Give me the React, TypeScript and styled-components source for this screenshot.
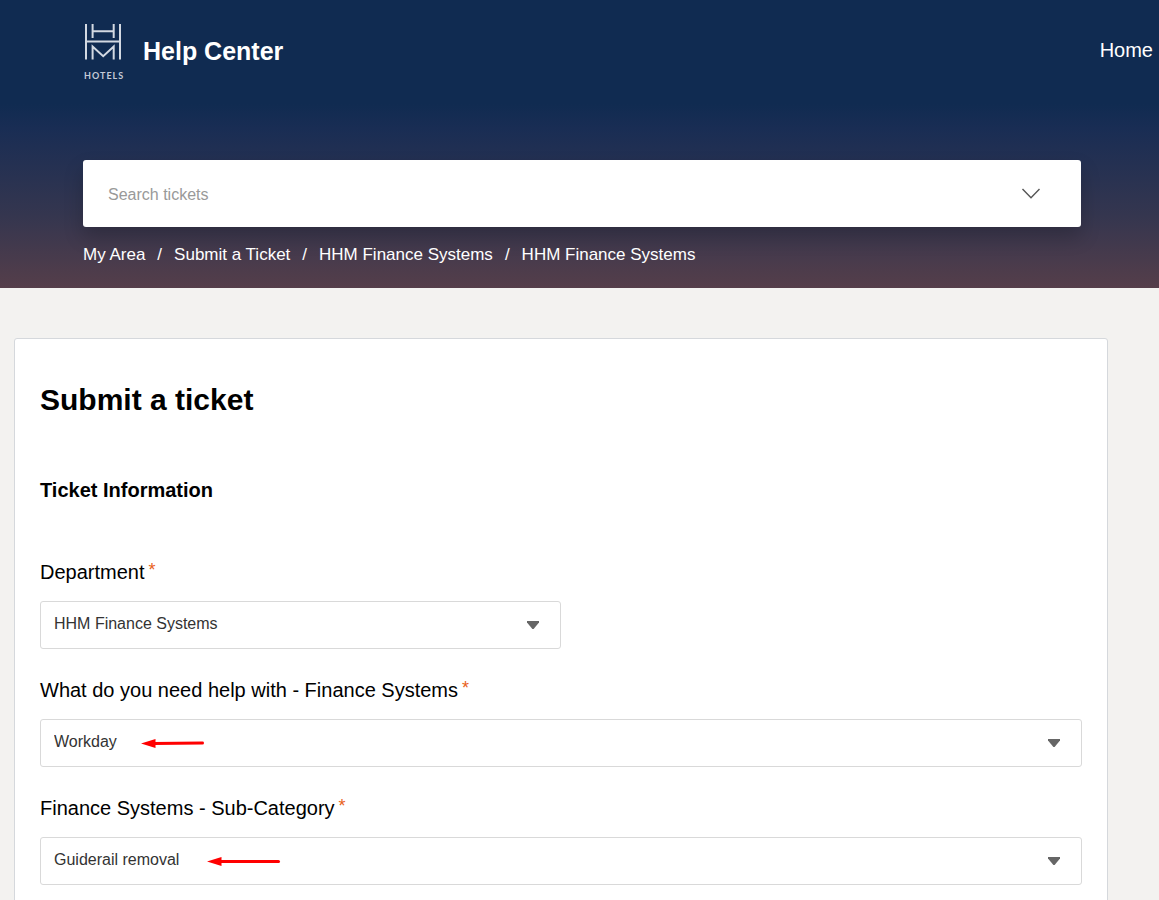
import React from "react";
import styled, { createGlobalStyle } from "styled-components";

const GlobalStyle = createGlobalStyle`
  *, *::before, *::after { box-sizing: border-box; }
  body {
    margin: 0;
    background: #f3f2f0;
    color: #000;
    font-family: "Liberation Sans", Arial, sans-serif;
  }
`;

const Header = styled.header`
  padding-bottom: 21px;
  background: linear-gradient(to bottom, #102b51 0, #102b51 104px, #192d54 128px, #35364f 216px, #553e4a 100%);
  color: #fff;
`;

const TopBar = styled.div`
  display: flex;
  align-items: center;
  justify-content: space-between;
  height: 100px;
  padding: 0 6px 0 83px;
`;

const Brand = styled.a`
  display: flex;
  align-items: center;
  gap: 20px;
  color: inherit;
  text-decoration: none;
`;

const Logo = styled.span`
  display: flex;
  flex-direction: column;
  align-items: flex-start;
  gap: 10px;
  width: 40px;
  padding-top: 4px;
`;

const LogoWord = styled.span`
  padding-left: 1px;
  color: #c3cad6;
  font: 700 9px/12px Lato, sans-serif;
  letter-spacing: 1px;
`;

const BrandName = styled.span`
  padding-top: 2px;
  font-size: 25px;
  font-weight: 700;
  line-height: 32px;
`;

const NavLink = styled.a`
  color: inherit;
  font-size: 20px;
  line-height: 24px;
  text-decoration: none;
`;

const HeaderBody = styled.div`
  padding: 60px 78px 0 83px;
`;

const SearchBox = styled.form`
  display: flex;
  align-items: center;
  height: 67px;
  padding: 0 32px 0 25px;
  border-radius: 3px;
  background: #fff;
  box-shadow: 0 10px 20px rgba(0, 0, 0, 0.2);
`;

const SearchInput = styled.input`
  flex: 1;
  min-width: 0;
  padding: 2px 0 0;
  border: 0;
  outline: 0;
  background: transparent;
  color: #333;
  font: 16px/24px "Liberation Sans", Arial, sans-serif;
  &::placeholder { color: #999; opacity: 1; }
`;

const SearchToggle = styled.button`
  display: flex;
  padding: 8px;
  border: 0;
  background: transparent;
  cursor: pointer;
`;

const Breadcrumbs = styled.ol`
  display: flex;
  margin: 16px 0 0;
  padding: 0;
  list-style: none;
  font-size: 17px;
  line-height: 24px;
`;

const Crumb = styled.li`
  & + &::before {
    content: "/";
    margin: 0 12px;
  }
  a { color: inherit; text-decoration: none; }
`;

const Card = styled.main`
  margin: 50px 51px 0 14px;
  padding: 43px 25px 29px;
  border: 1px solid #d5d8dc;
  border-radius: 3px;
  background: #fff;
`;

const Title = styled.h1`
  margin: 0;
  font-size: 30px;
  line-height: 36px;
`;

const SectionTitle = styled.h2`
  margin: 60px 0 58px;
  font-size: 20px;
  line-height: 24px;
`;

const Fields = styled.div`
  display: flex;
  flex-direction: column;
  gap: 29px;
`;

const Field = styled.div<{ $half?: boolean }>`
  display: flex;
  flex-direction: column;
  gap: 17px;
  width: ${(p) => (p.$half ? "50%" : "100%")};
`;

const Label = styled.label`
  display: flex;
  gap: 4px;
  font-size: 20px;
  line-height: 24px;
  white-space: nowrap;
`;

const Required = styled.span`
  color: #e8611a;
  font-size: 18px;
  line-height: 20px;
`;

const SelectWrap = styled.div`
  position: relative;
`;

const Select = styled.select`
  display: block;
  width: 100%;
  height: 48px;
  padding: 0 48px 2px 13px;
  border: 1px solid #d9d9d9;
  border-radius: 3px;
  appearance: none;
  background: #fff;
  color: #333;
  font: 16px/20px "Liberation Sans", Arial, sans-serif;
`;

const Caret = styled.svg`
  position: absolute;
  top: 20px;
  right: 22px;
  pointer-events: none;
`;

const Pointer = styled.svg<{ $left: number }>`
  position: absolute;
  top: 18px;
  left: ${(p) => p.$left}px;
  pointer-events: none;
`;

type Arrow = { left: number; length: number; rise: number };

const fields: { id: string; label: string; value: string; half?: boolean; arrow?: Arrow }[] = [
  { id: "department", label: "Department", value: "HHM Finance Systems", half: true },
  {
    id: "topic",
    label: "What do you need help with - Finance Systems",
    value: "Workday",
    arrow: { left: 101, length: 63, rise: 0.6 },
  },
  {
    id: "subcategory",
    label: "Finance Systems - Sub-Category",
    value: "Guiderail removal",
    arrow: { left: 167, length: 73, rise: 0 },
  },
];

const crumbs = ["My Area", "Submit a Ticket", "HHM Finance Systems", "HHM Finance Systems"];

function RedArrow({ left, length, rise }: Arrow) {
  return (
    <Pointer $left={left} width={length + 2} height="12" aria-hidden="true">
      <path d={`M12 6.5L${length - 1.5} ${6.5 - rise}`} stroke="#f00" strokeWidth="3" strokeLinecap="round" />
      <path d="M0 6.5L14.5 2V11Z" fill="#f00" />
    </Pointer>
  );
}

export default function App() {
  return (
    <>
      <GlobalStyle />
      <Header>
        <TopBar>
          <Brand href="#">
            <Logo>
              <svg width="40" height="37" viewBox="0 0 40 37" fill="none" stroke="#d3d9e2" strokeWidth="2" aria-hidden="true">
                <path d="M3 1V36.5M37 1V36.5M3 18.5H37" />
                <path d="M9.6 1V15M30.7 1V15M9.6 8.3H30.7" />
                <path d="M9.6 36.5V23.5L20.2 33.2L30.7 23.5V36.5" />
              </svg>
              <LogoWord>HOTELS</LogoWord>
            </Logo>
            <BrandName>Help Center</BrandName>
          </Brand>
          <nav>
            <NavLink href="#">Home</NavLink>
          </nav>
        </TopBar>
        <HeaderBody>
          <SearchBox role="search">
            <SearchInput type="text" placeholder="Search tickets" aria-label="Search tickets" />
            <SearchToggle type="button" aria-label="Search options">
              <svg width="20" height="12" viewBox="0 0 20 12" fill="none" stroke="#555" strokeWidth="1.4" aria-hidden="true">
                <path d="M1.5 1L10 9.7L18.5 1" />
              </svg>
            </SearchToggle>
          </SearchBox>
          <nav aria-label="Breadcrumb">
            <Breadcrumbs>
              {crumbs.map((name, i) => (
                <Crumb key={i}>
                  <a href="#">{name}</a>
                </Crumb>
              ))}
            </Breadcrumbs>
          </nav>
        </HeaderBody>
      </Header>
      <Card>
        <Title>Submit a ticket</Title>
        <SectionTitle>Ticket Information</SectionTitle>
        <Fields>
          {fields.map((f) => (
            <Field key={f.id} $half={f.half}>
              <Label htmlFor={f.id}>
                {f.label}
                <Required>*</Required>
              </Label>
              <SelectWrap>
                <Select id={f.id} defaultValue={f.value} required>
                  <option>{f.value}</option>
                </Select>
                {f.arrow && <RedArrow {...f.arrow} />}
                <Caret width="12" height="8" viewBox="0 0 12 8" aria-hidden="true">
                  <path d="M0 0H12V1.5L6.6 8H5.4L0 1.5Z" fill="#666" />
                </Caret>
              </SelectWrap>
            </Field>
          ))}
        </Fields>
      </Card>
    </>
  );
}
